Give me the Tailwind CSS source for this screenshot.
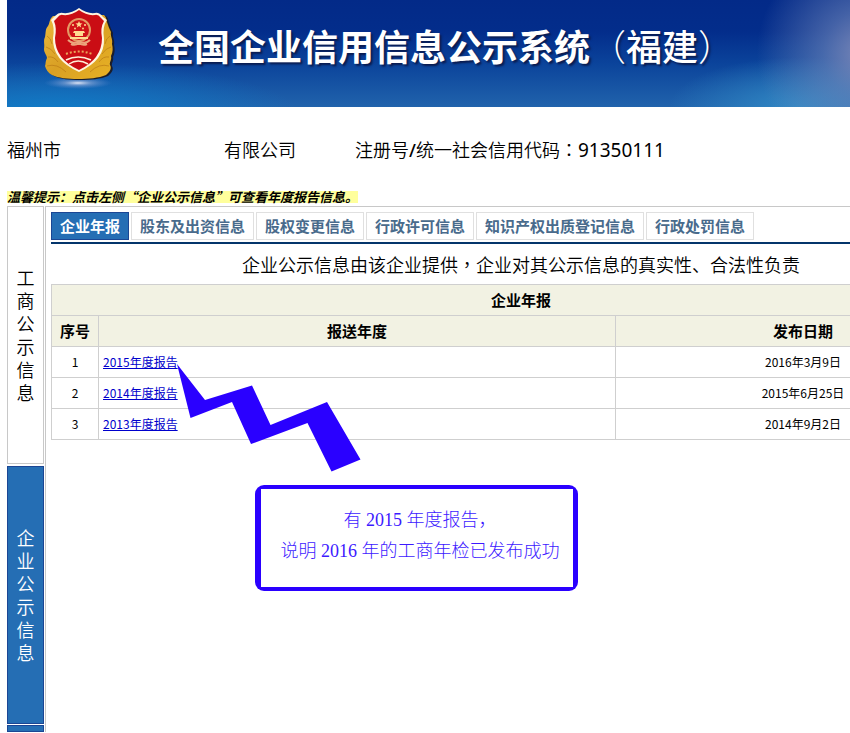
<!DOCTYPE html>
<html lang="zh-CN">
<head>
<meta charset="utf-8">
<meta name="viewport" content="width=device-width, initial-scale=1">
<title>全国企业信用信息公示系统（福建）</title>
<script src="https://cdn.jsdelivr.net/npm/@tailwindcss/browser@4"></script>
</head>
<body class="bg-white text-black font-['Noto_Sans_CJK_SC','Noto_Sans',sans-serif]">
<div class="relative min-h-screen overflow-hidden pl-[7px]">

  <header class="flex h-[107px] items-start bg-[radial-gradient(ellipse_110px_110px_at_102%_50%,#7c88b8_0%,#6f86ba99_40%,transparent_100%),radial-gradient(ellipse_130px_50px_at_94%_100%,#3088c4_0%,transparent_100%),radial-gradient(ellipse_240px_50px_at_6%_105%,#0f7cc8_0%,transparent_100%),linear-gradient(to_bottom,#032a88_0%,#032d8b_30%,#0b449b_60%,#2163ac_100%)]">
    <svg class="ml-[34px] mt-[5px] h-[88px] w-[74px] shrink-0" viewBox="41 5 74 88" role="img" aria-label="工商徽章">
      <defs>
        <radialGradient id="glow"><stop offset="0" stop-color="#dfe6f5"/><stop offset=".4" stop-color="#8fa9d8" stop-opacity=".6"/><stop offset="1" stop-color="#5f88cc" stop-opacity="0"/></radialGradient>
        <linearGradient id="gold" x1="0" y1="0" x2="1" y2="1"><stop offset="0" stop-color="#edb93c"/><stop offset=".5" stop-color="#d9a024"/><stop offset="1" stop-color="#e8b224"/></linearGradient>
      </defs>
      <ellipse cx="78" cy="83" rx="34" ry="6" fill="url(#glow)"/>
      <path d="M53 16 C49 19 50 23 48 26 C45 29 46 33 45 37 C43 41 45 44 44 49 C44 53 47 55 47 58 C45 62 46 64 45 66 C46 69 48 73 52 75 C58 78 68 79 78 79 C88 79 99 78 106 75 C110 72 112 68 110 65 C109 62 112 60 111 56 C113 52 113 48 112 44 C113 39 110 36 111 32 C109 28 108 25 107 22 C106 18 106 17 104 15Z" fill="#1b1d2a" transform="translate(2 1)"/>
      <path d="M53 16 C49 19 50 23 48 26 C45 29 46 33 45 37 C43 41 45 44 44 49 C44 53 47 55 47 58 C45 62 46 64 45 66 C46 69 48 73 52 75 C58 78 68 79 78 79 C88 79 99 78 106 75 C110 72 112 68 110 65 C109 62 112 60 111 56 C113 52 113 48 112 44 C113 39 110 36 111 32 C109 28 108 25 107 22 C106 18 106 17 104 15Z" fill="url(#gold)"/>
      <g fill="none" stroke="#b87814" stroke-width="1" opacity=".65">
        <path d="M47 36 Q51 38 52 44M46 47 Q51 48 55 54M48 57 Q54 56 58 62M47 66 Q57 63 66 72M110 36 Q106 38 105 44M111 47 Q106 48 102 54M109 57 Q103 56 99 62M109 66 Q99 63 90 72"/>
      </g>
      <path d="M79 8 Q87 14 95 13 Q99 12 103 17 L107 20 Q102 27 104 39 Q105 60 79 72 Q52 60 53 38 Q55 27 51 20 L55 16 Q59 12 63 13 Q71 14 79 8Z" fill="#fff5df"/>
      <path d="M79 10 Q87 16 95 15 Q98 14 101 18 L104 21 Q100 28 102 38 Q102 59 79 70 Q55 59 55 38 Q57 28 54 21 L57 18 Q60 14 63 15 Q71 16 79 10Z" fill="#ca0d14"/>
      <circle cx="79" cy="30" r="11" fill="#cf1217" stroke="#e49a65" stroke-width="2"/>
      <g fill="#ffdc90">
        <path d="m79 21 1 2.300 2.500.100-2 1.600.700 2.400-2.200-1.400-2.200 1.400.700-2.400-2-1.600 2.500-.100z"/>
        <circle cx="73" cy="25" r="1"/><circle cx="85" cy="25" r="1"/><circle cx="75" cy="28.500" r=".9"/><circle cx="83" cy="28.500" r=".9"/>
        <path d="M74 31h10l1 2h-2v3h-8v-3h-2zM70 37h18v2H70z"/>
      </g>
      <path d="M68 40 Q73 45 79 41 Q85 45 90 40M71 44 Q75 46 79 43 Q83 46 87 44" fill="none" stroke="#eca47c" stroke-width="2"/>
      <path d="M66 54 Q79 49 92 54" fill="none" stroke="#e9a65a" stroke-width="2" stroke-dasharray="2 2"/>
      <path d="M66 60 Q78 54 91 60M69 64 Q78 58 88 64" fill="none" stroke="#fff0d8" stroke-width="1.500"/>
    </svg>
    <h1 class="ml-[43px] mt-[19px] whitespace-nowrap text-[36px] leading-[52px] font-bold text-white [text-shadow:2px_2px_2px_#0a1c50]">全国企业信用信息公示系统<span class="font-light">（</span><span class="font-medium">福建</span><span class="font-light">）</span></h1>
  </header>

  <section class="mt-[29px] flex h-[27px] items-center whitespace-nowrap text-[18px] leading-[27px] font-[350]" aria-label="企业信息">
    <span class="w-[217px]">福州市</span>
    <span class="w-[131px]">有限公司</span>
    <span>注册号<span class="font-['Noto_Sans'] font-medium">/</span>统一社会信用代码<span class="font-['Noto_Sans_CJK_TC']" lang="zh-TW">：</span><span class="font-['Noto_Sans'] text-[19px] font-normal">91350111</span></span>
  </section>

  <p class="mt-[28px] flex h-[12px] items-center"><strong class="whitespace-nowrap bg-[#ffff9c] text-[13px] leading-[12px] font-bold italic">温馨提示：点击左侧“企业公示信息”可查看年度报告信息。</strong></p>

  <div class="mt-[3px] flex min-w-[984px] items-stretch">
    <nav class="flex w-[37px] shrink-0 flex-col gap-[2px] text-[18px] leading-[23px] font-[350]" aria-label="信息类别">
      <button class="flex h-[258px] items-center justify-center border border-[#c8c8c8] bg-white"><span class="w-[18px]">工商公示信息</span></button>
      <button class="flex h-[258px] items-center justify-center border border-[#1b4694] bg-[#256eb4] text-white"><span class="w-[18px]">企业公示信息</span></button>
      <div class="-mt-px h-[7px] border border-[#1b4694] bg-[#256eb4]"></div>
    </nav>

    <main class="ml-px flex-1 border-t border-l border-[#c8c8c8] pt-[5px] pl-[5px]">
      <div class="flex gap-[2px] border-b-2 border-[#04356b] pb-[2px] text-[15px] leading-[26px] font-bold whitespace-nowrap text-[#496b8c]" role="tablist">
        <button role="tab" aria-selected="true" class="border border-[#1b4694] bg-[#256eb4] px-2 text-white">企业年报</button>
        <button role="tab" class="border border-[#e0e0e0] px-2">股东及出资信息</button>
        <button role="tab" class="border border-[#e0e0e0] px-2">股权变更信息</button>
        <button role="tab" class="border border-[#e0e0e0] px-2">行政许可信息</button>
        <button role="tab" class="border border-[#e0e0e0] px-2">知识产权出质登记信息</button>
        <button role="tab" class="border border-[#e0e0e0] px-2">行政处罚信息</button>
      </div>
      <p class="h-[40px] text-center text-[18px] leading-[40px] font-[350]">企业公示信息由该企业提供<span class="font-['Noto_Sans_CJK_TC']" lang="zh-TW">，</span>企业对其公示信息的真实性、合法性负责</p>
      <table class="w-full table-fixed border-collapse text-center text-[12px] leading-[18px]">
        <colgroup><col class="w-[47px]"><col class="w-[517px]"><col></colgroup>
        <thead class="bg-[#f2f2e3] text-[15px]">
          <tr class="h-[31px]"><th colspan="3" class="border border-[#cfcfcf]">企业年报</th></tr>
          <tr class="h-[31px]"><th class="border border-[#cfcfcf]">序号</th><th class="border border-[#cfcfcf]">报送年度</th><th class="border border-[#cfcfcf]">发布日期</th></tr>
        </thead>
        <tbody>
          <tr class="h-[31px]"><td class="border border-[#cfcfcf]">1</td><td class="border border-[#cfcfcf] pl-1 text-left"><a href="#" class="text-[#0000cc] underline">2015年度报告</a></td><td class="border border-[#cfcfcf]">2016年3月9日</td></tr>
          <tr class="h-[31px]"><td class="border border-[#cfcfcf]">2</td><td class="border border-[#cfcfcf] pl-1 text-left"><a href="#" class="text-[#0000cc] underline">2014年度报告</a></td><td class="border border-[#cfcfcf]">2015年6月25日</td></tr>
          <tr class="h-[31px]"><td class="border border-[#cfcfcf]">3</td><td class="border border-[#cfcfcf] pl-1 text-left"><a href="#" class="text-[#0000cc] underline">2013年度报告</a></td><td class="border border-[#cfcfcf]">2014年9月2日</td></tr>
        </tbody>
      </table>
    </main>
  </div>

  <!-- annotation laid over the table -->
  <svg class="pointer-events-none absolute top-[363px] left-[176px] h-[110px] w-[186px]" viewBox="176 363 186 110" aria-hidden="true">
    <path d="M177 364 205 400 252 385.500 270.500 425 327 402 360.500 459.500 331.500 471.500 307.500 423 251 444 232 402 190.500 418Z" fill="#2a00ff"/>
  </svg>
  <aside class="absolute top-[485px] left-[255px] h-[106px] w-[323px] rounded-[9px] bg-[#2a00ff] py-1 pr-[5px] pl-[6px]">
    <p class="h-full bg-white pt-4 pl-[6px] text-center font-['Liberation_Serif','Noto_Sans_CJK_SC',serif] text-[18px] leading-[31px] font-light whitespace-nowrap text-[#3d1aff]">有 2015 年度报告，<br>说明 2016 年的工商年检已发布成功</p>
  </aside>
</div>
</body>
</html>
